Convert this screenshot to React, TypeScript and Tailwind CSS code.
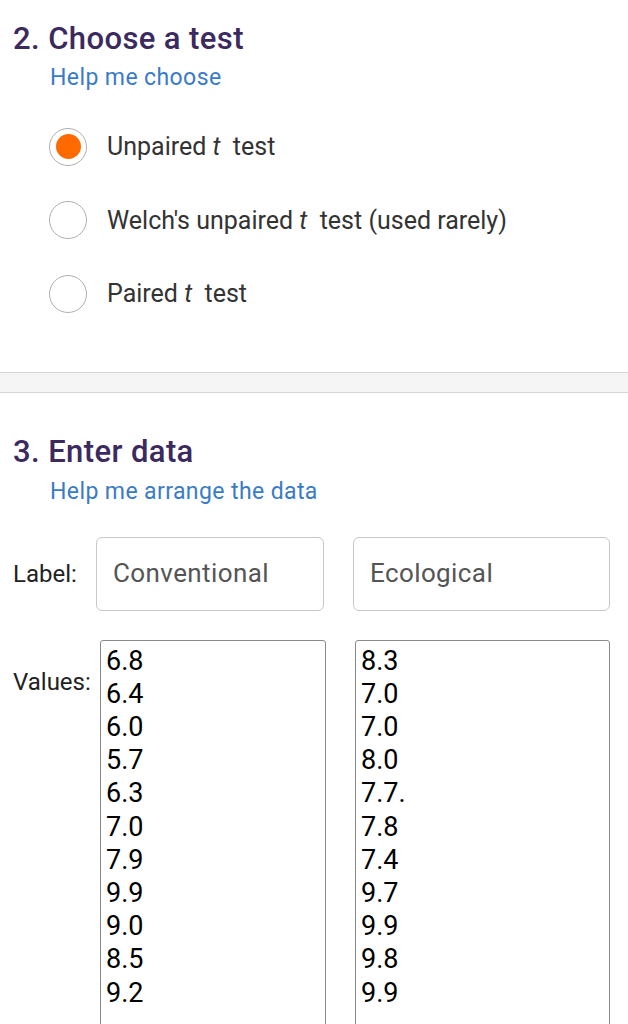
import React from "react";

const groupA = ["6.8", "6.4", "6.0", "5.7", "6.3", "7.0", "7.9", "9.9", "9.0", "8.5", "9.2"];
const groupB = ["8.3", "7.0", "7.0", "8.0", "7.7.", "7.8", "7.4", "9.7", "9.9", "9.8", "9.9"];

function Radio({ checked, children }: { checked?: boolean; children: React.ReactNode }) {
  return (
    <div className="flex h-[73.5px] items-center">
      <span className="ml-[49px] flex h-[38px] w-[38px] items-center justify-center rounded-full border-[1.5px] border-[#b0b0b0] bg-white">
        {checked && <span className="h-[25px] w-[25px] rounded-full bg-[#ff6a00]" />}
      </span>
      <span className="ml-[20px] text-[25px] text-[#333]">{children}</span>
    </div>
  );
}

export default function App() {
  const heading = "text-[31px] font-medium tracking-[0.4px] text-[#3b2a5e] leading-none";
  const help = "text-[23px] text-[#3a7bc8] leading-none tracking-[0.4px]";
  return (
    <div className="min-h-[1024px] overflow-hidden bg-white" style={{ fontFamily: "Roboto, 'Liberation Sans', sans-serif" }}>
      <section className="pt-[23px]">
        <h2 className={`${heading} ml-[13px]`}>2. Choose a test</h2>
        <a className={`${help} ml-[50px] mt-[12px] block`}>Help me choose</a>
        <div className="mt-[21px]">
          <Radio checked>
            Unpaired <i>t</i>&nbsp; test
          </Radio>
          <Radio>
            Welch's unpaired <i>t</i>&nbsp; test (used rarely)
          </Radio>
          <Radio>
            Paired <i>t</i>&nbsp; test
          </Radio>
        </div>
      </section>

      <div className="mt-[41px] h-[21px] border-y border-[#d4d4d4] bg-[#f5f5f5]" />

      <section className="pt-[43px]">
        <h2 className={`${heading} ml-[13px]`}>3. Enter data</h2>
        <a className={`${help} ml-[50px] mt-[13px] block`}>Help me arrange the data</a>

        <div className="mt-[34px] flex items-center">
          <span className="ml-[13px] w-[83px] text-[24px] text-[#222]">Label:</span>
          <div className="flex h-[74px] w-[228px] items-center rounded-[6px] border border-[#c8c8c8] pl-[16px] text-[26px] tracking-[0.4px] text-[#555]">
            Conventional
          </div>
          <div className="ml-[29px] flex h-[74px] w-[257px] items-center rounded-[6px] border border-[#c8c8c8] pl-[16px] text-[26px] tracking-[0.4px] text-[#555]">
            Ecological
          </div>
        </div>

        <div className="mt-[29px] flex items-start">
          <span className="ml-[13px] mt-[24px] w-[87px] text-[24px] text-[#222]">Values:</span>
          <div className="h-[400px] w-[226px] rounded-t-[3px] border border-[#8a8a8a] pl-[5px] pt-[4px] text-[27px] leading-[33.2px] text-black">
            {groupA.map((v, i) => (
              <div key={i}>{v}</div>
            ))}
          </div>
          <div className="ml-[29px] h-[400px] w-[255px] rounded-t-[3px] border border-[#8a8a8a] pl-[5px] pt-[4px] text-[27px] leading-[33.2px] text-black">
            {groupB.map((v, i) => (
              <div key={i}>{v}</div>
            ))}
          </div>
        </div>
      </section>
    </div>
  );
}
